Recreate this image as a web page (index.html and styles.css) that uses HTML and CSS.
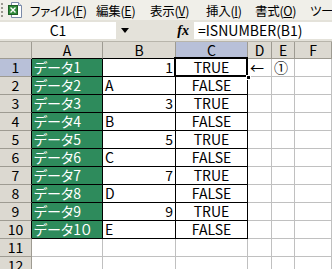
FILE: index.html
```html
<!DOCTYPE html>
<html>
<head>
    <title>Excel</title>
    <link rel="stylesheet" href="styles.css">
</head>
<body>
    <div class="menubar">
        <span class="grip"></span>
        <svg class="appicon" width="14" height="16" viewBox="0 0 14 16">
            <path d="M3.5 0.5h7l3 3v12h-10z" fill="#fff" stroke="#7a8aa8"/>
            <path d="M10.5 0.5v3h3" fill="#dde4f0" stroke="#7a8aa8"/>
            <rect x="0.5" y="3.5" width="9" height="9" fill="#2f8a3a" stroke="#1d5e25"/>
            <path d="M2.5 5.5l5 5M7.5 5.5l-5 5" stroke="#fff" stroke-width="1.4"/>
        </svg>
        <span class="menu m1">ファイル(<u>F</u>)</span>
        <span class="menu m2">編集(<u>E</u>)</span>
        <span class="menu m3">表示(<u>V</u>)</span>
        <span class="menu m4">挿入(<u>I</u>)</span>
        <span class="menu m5">書式(<u>O</u>)</span>
        <span class="menu">ツール(<u>T</u>)</span>
    </div>

    <div class="formulabar">
        <div class="namebox">C1</div>
        <div class="nbdrop">
            <svg width="8" height="5" viewBox="0 0 8 5"><path d="M0 0h8l-4 5z" fill="#000"/></svg>
        </div>
        <div class="fx">fx</div>
        <div class="formula">=ISNUMBER(B1)</div>
    </div>

    <div class="sheet">
        <div class="row head">
            <div class="corner"></div>
            <div class="ch hb">A</div>
            <div class="ch hb">B</div>
            <div class="ch hb on">C</div>
            <div class="ch">D</div>
            <div class="ch">E</div>
            <div class="ch">F</div>
        </div>
        <div class="row">
            <div class="rh hb on">1</div>
            <div class="c a">データ1</div>
            <div class="c box num">1</div>
            <div class="c box ctr sel">TRUE</div>
            <div class="c">←</div>
            <div class="c">①</div>
            <div class="c"></div>
        </div>
        <div class="row">
            <div class="rh hb">2</div>
            <div class="c a">データ2</div>
            <div class="c box">A</div>
            <div class="c box ctr">FALSE</div>
            <div class="c"></div>
            <div class="c"></div>
            <div class="c"></div>
        </div>
        <div class="row">
            <div class="rh hb">3</div>
            <div class="c a">データ3</div>
            <div class="c box num">3</div>
            <div class="c box ctr">TRUE</div>
            <div class="c"></div>
            <div class="c"></div>
            <div class="c"></div>
        </div>
        <div class="row">
            <div class="rh hb">4</div>
            <div class="c a">データ4</div>
            <div class="c box">B</div>
            <div class="c box ctr">FALSE</div>
            <div class="c"></div>
            <div class="c"></div>
            <div class="c"></div>
        </div>
        <div class="row">
            <div class="rh hb">5</div>
            <div class="c a">データ5</div>
            <div class="c box num">5</div>
            <div class="c box ctr">TRUE</div>
            <div class="c"></div>
            <div class="c"></div>
            <div class="c"></div>
        </div>
        <div class="row">
            <div class="rh hb">6</div>
            <div class="c a">データ6</div>
            <div class="c box">C</div>
            <div class="c box ctr">FALSE</div>
            <div class="c"></div>
            <div class="c"></div>
            <div class="c"></div>
        </div>
        <div class="row">
            <div class="rh hb">7</div>
            <div class="c a">データ7</div>
            <div class="c box num">7</div>
            <div class="c box ctr">TRUE</div>
            <div class="c"></div>
            <div class="c"></div>
            <div class="c"></div>
        </div>
        <div class="row">
            <div class="rh hb">8</div>
            <div class="c a">データ8</div>
            <div class="c box">D</div>
            <div class="c box ctr">FALSE</div>
            <div class="c"></div>
            <div class="c"></div>
            <div class="c"></div>
        </div>
        <div class="row">
            <div class="rh hb">9</div>
            <div class="c a">データ9</div>
            <div class="c box num">9</div>
            <div class="c box ctr">TRUE</div>
            <div class="c"></div>
            <div class="c"></div>
            <div class="c"></div>
        </div>
        <div class="row">
            <div class="rh hb">10</div>
            <div class="c a">データ1０</div>
            <div class="c box">E</div>
            <div class="c box ctr">FALSE</div>
            <div class="c"></div>
            <div class="c"></div>
            <div class="c"></div>
        </div>
        <div class="row">
            <div class="rh">11</div>
            <div class="c"></div>
            <div class="c"></div>
            <div class="c"></div>
            <div class="c"></div>
            <div class="c"></div>
            <div class="c"></div>
        </div>
        <div class="row">
            <div class="rh">12</div>
            <div class="c"></div>
            <div class="c"></div>
            <div class="c"></div>
            <div class="c"></div>
            <div class="c"></div>
            <div class="c"></div>
        </div>
    </div>
</body>
</html>
```

FILE: styles.css
```css
body {
    margin: 0;
    width: 332px;
    height: 269px;
    overflow: hidden;
    background: #fff;
    font-family: "Noto Sans CJK JP", "Liberation Sans", sans-serif;
    font-feature-settings: "palt";
    font-size: 14px;
    color: #000;
}
.menubar {
    height: 20px;
    display: flex;
    align-items: center;
    background: #f0efe9;
    white-space: nowrap;
    overflow: hidden;
    font-size: 12.5px;
}
.grip {
    flex-shrink: 0;
    width: 2px;
    height: 14px;
    margin: 0 5px 0 1px;
    background: repeating-linear-gradient(#9a9890 0 2px, transparent 2px 4px);
}
.appicon {
    flex-shrink: 0;
    margin-right: 8px;
}
.menu {
    flex-shrink: 0;
    letter-spacing: -0.3px;
}
.m1 { width: 66px; }
.m2 { width: 54px; }
.m3 { width: 56px; }
.m4 { width: 49px; }
.m5 { width: 55px; }
.formulabar {
    height: 22px;
    display: flex;
    background: #e4e2da;
    border-bottom: 1px solid #b8b5ab;
    box-sizing: border-box;
}
.namebox {
    width: 116px;
    margin: 2px 0;
    background: #fff;
    text-align: center;
    line-height: 17px;
}
.nbdrop {
    width: 18px;
    display: flex;
    align-items: center;
    justify-content: center;
}
.fx {
    width: 60px;
    text-align: right;
    padding-right: 5px;
    box-sizing: border-box;
    font-family: "Liberation Serif", serif;
    font-style: italic;
    font-weight: bold;
    line-height: 21px;
}
.formula {
    flex: 1;
    margin: 2px 0;
    background: #fff;
    padding-left: 4px;
    line-height: 17px;
}
.row {
    display: grid;
    grid-template-columns: 32px 71px 73px 72px 24px 23px 1fr;
    height: 18px;
}
.row.head {
    height: 17px;
}
.row > div {
    box-sizing: border-box;
    border-right: 1px solid #c0c0c0;
    border-bottom: 1px solid #c0c0c0;
    line-height: 17px;
    white-space: nowrap;
    overflow: hidden;
    padding: 0 2px;
}
.corner, .ch, .rh {
    background: #dcd9d1;
    text-align: center;
}
.row > .corner, .row > .ch, .row > .rh {
    border-color: #9e9b92;
}
.row > .ch {
    line-height: 16px;
}
.row > .ch.hb {
    border-bottom-color: #000;
}
.row > .rh.hb {
    border-right-color: #000;
}
.ch.on, .rh.on {
    background: #b8c0d8;
}
.row > .a {
    background: #2e8b5c;
    color: #fff;
    border-color: #000;
}
.row > .box {
    border-color: #000;
}
.num {
    text-align: right;
}
.ctr {
    text-align: center;
}
.row > .sel {
    position: relative;
    overflow: visible;
}
.sel::after {
    content: "";
    position: absolute;
    top: -2px;
    left: -2px;
    right: -1px;
    bottom: -1px;
    border: 2px solid #000;
    z-index: 2;
}
.sel::before {
    content: "";
    position: absolute;
    right: -4px;
    bottom: -4px;
    width: 5px;
    height: 5px;
    background: #000;
    border: 1px solid #fff;
    box-sizing: border-box;
    z-index: 3;
}
```
